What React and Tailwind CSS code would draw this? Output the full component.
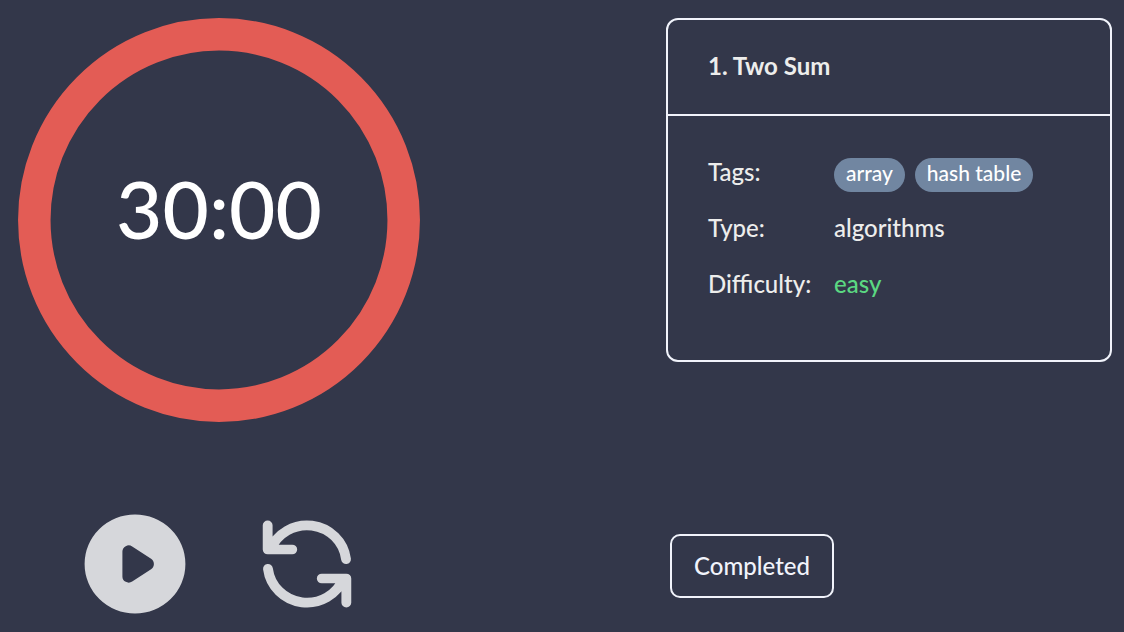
import React from "react";

const rows = [
  { label: "Type:", value: "algorithms", tone: "" },
  { label: "Difficulty:", value: "easy", tone: "text-[#5bd882]" },
];

function Timer() {
  return (
    <div className="grid place-items-center">
      <svg
        className="col-start-1 row-start-1 h-[404px] w-full"
        viewBox="0 0 402 404"
        preserveAspectRatio="none"
        aria-hidden="true"
      >
        <ellipse cx="201" cy="202" rx="184.7" ry="185.7" fill="none" stroke="#e35c55" strokeWidth="32.5" />
      </svg>
      <time className="col-start-1 row-start-1 pb-6 text-[80px] leading-none font-medium text-white">
        30:00
      </time>
    </div>
  );
}

function Controls() {
  return (
    <div className="flex items-center justify-center gap-[50px] text-[#d6d7db]">
      <button type="button" aria-label="Start">
        <svg className="h-[124px] w-[126px]" viewBox="0 0 20 20" preserveAspectRatio="none" fill="currentColor">
          <path
            fillRule="evenodd"
            clipRule="evenodd"
            d="M10 18a8 8 0 100-16 8 8 0 000 16zM9.555 7.168A1 1 0 008 8v4a1 1 0 001.555.832l3-2a1 1 0 000-1.664l-3-2z"
          />
        </svg>
      </button>
      <button type="button" aria-label="Reset">
        <svg
          className="h-[116px] w-[118px]"
          viewBox="0 0 24 24"
          preserveAspectRatio="none"
          fill="none"
          stroke="currentColor"
          strokeWidth="2"
          strokeLinecap="round"
          strokeLinejoin="round"
        >
          <path d="M4 4v5h.582m15.356 2A8.001 8.001 0 004.582 9m0 0H9m11 11v-5h-.581m0 0a8.003 8.003 0 01-15.357-2m15.357 2H15" />
        </svg>
      </button>
    </div>
  );
}

function Tag({ children }) {
  return (
    <li className="h-[34px] rounded-full bg-[#7186a1] px-3 text-[21px] leading-[30px] font-medium text-white">
      {children}
    </li>
  );
}

function ProblemCard() {
  return (
    <article className="self-start rounded-xl border-2 border-[#f1f3fb] text-2xl text-[#ededec]">
      <h1 className="border-b-2 border-[#f1f3fb] px-10 pt-[26px] pb-7 leading-10 font-bold">1. Two Sum</h1>
      <dl className="grid grid-cols-[126px_1fr] gap-y-4 px-10 pt-9 pb-[56px] font-medium leading-10">
        <dt>Tags:</dt>
        <dd>
          <ul className="flex gap-[10px] pt-[6px]">
            <Tag>array</Tag>
            <Tag>hash table</Tag>
          </ul>
        </dd>
        {rows.map((row) => (
          <React.Fragment key={row.label}>
            <dt>{row.label}</dt>
            <dd className={row.tone}>{row.value}</dd>
          </React.Fragment>
        ))}
      </dl>
    </article>
  );
}

export default function App() {
  return (
    <main className="grid min-h-screen grid-cols-[402px_446px] content-start justify-between gap-y-20 bg-[#33374a] pt-[18px] pr-3 pl-[18px] font-['Lato',sans-serif]">
      <Timer />
      <ProblemCard />
      <Controls />
      <div className="flex items-center pt-1 pl-1">
        <button
          type="button"
          className="h-16 min-w-[164px] rounded-[10px] border-2 border-[#f1f3fb] px-5 text-2xl font-medium text-[#f1f3fb]"
        >
          Completed
        </button>
      </div>
    </main>
  );
}
